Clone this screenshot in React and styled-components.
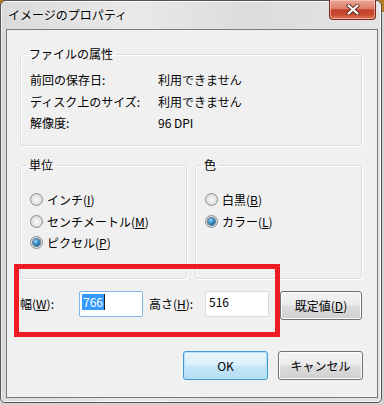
import React from "react";
import styled, { createGlobalStyle } from "styled-components";

const GlobalStyle = createGlobalStyle`
  html, body {
    margin: 0;
    padding: 0;
  }
  body {
    width: 384px;
    height: 405px;
    overflow: hidden;
    background: linear-gradient(180deg, #b97c22 0, #b97c22 12px, #d4d4d4 12px);
    font-family: "Noto Sans CJK JP", "Noto Sans", sans-serif;
    font-size: 12px;
    color: #000;
  }
`;

const Window = styled.div`
  width: 382px;
  height: 403px;
  box-sizing: border-box;
  border: 1px solid #555;
  border-radius: 6px 6px 5px 5px;
  background: linear-gradient(90deg, #dadada 0%, #e9e9e9 35%, #dcdcdc 65%, #e4e4e4 100%);
  box-shadow: inset 0 0 0 1px rgba(255, 255, 255, 0.7);
  display: flex;
  flex-direction: column;
  padding: 0 3px 4px 5px;
`;

const TitleBar = styled.div`
  height: 28px;
  flex: none;
  display: flex;
  justify-content: space-between;
  align-items: flex-start;
`;

const Title = styled.div`
  margin: 6px 0 0 2px;
  line-height: 16px;
  text-shadow: 0 0 6px rgba(255, 255, 255, 0.9);
`;

const CloseButton = styled.div`
  width: 47px;
  height: 20px;
  margin: -1px 2px 0 0;
  box-sizing: border-box;
  border: 1px solid #7a2c20;
  border-top: none;
  border-radius: 0 0 4px 4px;
  background: linear-gradient(180deg, #eba796 0%, #dc7e69 45%, #c2412a 52%, #c84b31 78%, #e07b5b 100%);
  box-shadow: inset 0 0 0 1px rgba(255, 220, 210, 0.5);
  display: flex;
  align-items: center;
  justify-content: center;
`;

const Client = styled.div`
  position: relative;
  flex: 1;
  border: 1px solid #7a7a7a;
  background: #f0f0f0;
  padding: 16px 14px 0 13px;
  display: flex;
  flex-direction: column;
`;

const Group = styled.fieldset`
  margin: 0;
  min-width: 0;
  box-sizing: border-box;
  width: ${(p) => p.$width}px;
  border: 1px solid #d5dfe5;
  border-radius: 3px;
  box-shadow: inset 1px 1px 0 #fff, 1px 1px 0 #fff;
  padding: ${(p) => p.$pad};
`;

const Legend = styled.legend`
  padding: 0 3px;
  margin-left: -4px;
  line-height: 16px;
`;

const InfoGrid = styled.div`
  display: grid;
  grid-template-columns: 128px 1fr;
  grid-auto-rows: 21.5px;
  align-items: center;
`;

const GroupRow = styled.div`
  display: flex;
  gap: 8px;
  margin-top: 11px;
`;

const RadioRow = styled.div`
  display: flex;
  align-items: center;
  gap: 4px;
  height: 21.5px;
`;

const RadioDot = styled.span`
  width: 13px;
  height: 13px;
  box-sizing: border-box;
  border-radius: 50%;
  border: 1px solid #8b8c8c;
  background: radial-gradient(circle at 50% 50%, #fafafa 0, #e8e8e8 45%, #cfcfcf 100%);
  display: flex;
  align-items: center;
  justify-content: center;

  &::after {
    content: "";
    width: 7px;
    height: 7px;
    border-radius: 50%;
    background: ${(p) =>
      p.$checked
        ? "radial-gradient(circle at 40% 35%, #a6dcfa 0, #2f86c6 45%, #0c4272 100%)"
        : "transparent"};
    box-shadow: ${(p) => (p.$checked ? "0 0 0 1px #5a7a95" : "none")};
  }
`;

const SizeRow = styled.div`
  display: flex;
  align-items: flex-start;
  margin-top: 12px;
`;

const FieldLabel = styled.div`
  width: ${(p) => p.$width}px;
  height: 26px;
  line-height: 26px;
  flex: none;
`;

const TextBox = styled.div`
  width: 64px;
  height: 26px;
  box-sizing: border-box;
  flex: none;
  background: #fff;
  border: 1px solid ${(p) => (p.$focused ? "#7eb4ea" : "#d6dae1")};
  border-radius: 2px;
  padding: 2px 3px;
  line-height: 16px;
  margin-right: ${(p) => p.$gap}px;
`;

const Selected = styled.span`
  display: inline-block;
  background: #3399ff;
  color: #fff;
  margin-left: -1px;
  padding: 0 1px;
  border-right: 1px solid #222;
`;

const Button = styled.div`
  width: ${(p) => p.$width}px;
  height: 29px;
  box-sizing: border-box;
  flex: none;
  border-radius: 3px;
  display: flex;
  align-items: center;
  justify-content: center;
  border: 1px solid ${(p) => (p.$primary ? "#3c9ad6" : "#707070")};
  background: ${(p) =>
    p.$primary
      ? "linear-gradient(180deg, #eaf6fd 0%, #d9effc 48%, #c6e6f8 52%, #b4dcf2 100%)"
      : "linear-gradient(180deg, #f3f3f3 0%, #ebebeb 48%, #dddddd 52%, #cfcfcf 100%)"};
  box-shadow: inset 0 0 0 1px ${(p) => (p.$primary ? "#b8e4fb" : "#fcfcfc")};
`;

const ButtonRow = styled.div`
  display: flex;
  justify-content: flex-end;
  gap: 10px;
  margin-top: 31px;
`;

const Highlight = styled.div`
  position: absolute;
  left: 7px;
  top: 234px;
  width: 266px;
  height: 73px;
  box-sizing: border-box;
  border: 5px solid #ed1c24;
  pointer-events: none;
`;

const CloseIcon = () => (
  <svg width="14" height="11" viewBox="0 0 14 11">
    <path d="M2.5 1.5 L11.5 9.5 M11.5 1.5 L2.5 9.5" stroke="#5a2a22" strokeWidth="4" strokeLinecap="round" />
    <path d="M2.5 1.5 L11.5 9.5 M11.5 1.5 L2.5 9.5" stroke="#fff" strokeWidth="2.2" strokeLinecap="round" />
  </svg>
);

const Radio = ({ checked, children }) => (
  <RadioRow>
    <RadioDot $checked={checked} />
    <span>{children}</span>
  </RadioRow>
);

export default function App() {
  return (
    <>
      <GlobalStyle />
      <Window>
        <TitleBar>
          <Title>イメージのプロパティ</Title>
          <CloseButton>
            <CloseIcon />
          </CloseButton>
        </TitleBar>
        <Client>
          <Group $width={342} $pad="7px 9px 11.5px">
            <Legend>ファイルの属性</Legend>
            <InfoGrid>
              <span>前回の保存日:</span>
              <span>利用できません</span>
              <span>ディスク上のサイズ:</span>
              <span>利用できません</span>
              <span>解像度:</span>
              <span>96 DPI</span>
            </InfoGrid>
          </Group>

          <GroupRow>
            <Group $width={167} $pad="16px 9px 24px">
              <Legend>単位</Legend>
              <Radio>インチ(<u>I</u>)</Radio>
              <Radio>センチメートル(<u>M</u>)</Radio>
              <Radio checked>ピクセル(<u>P</u>)</Radio>
            </Group>
            <Group $width={167} $pad="16px 9px 24px">
              <Legend>色</Legend>
              <Radio>白黒(<u>B</u>)</Radio>
              <Radio checked>カラー(<u>L</u>)</Radio>
            </Group>
          </GroupRow>

          <SizeRow>
            <FieldLabel $width={59}>幅(<u>W</u>):</FieldLabel>
            <TextBox $focused $gap={6}>
              <Selected>766</Selected>
            </TextBox>
            <FieldLabel $width={56}>高さ(<u>H</u>):</FieldLabel>
            <TextBox $gap={11}>516</TextBox>
            <Button $width={82}>既定値(<u>D</u>)</Button>
          </SizeRow>

          <ButtonRow>
            <Button $width={85} $primary>OK</Button>
            <Button $width={85}>キャンセル</Button>
          </ButtonRow>

          <Highlight />
        </Client>
      </Window>
    </>
  );
}
